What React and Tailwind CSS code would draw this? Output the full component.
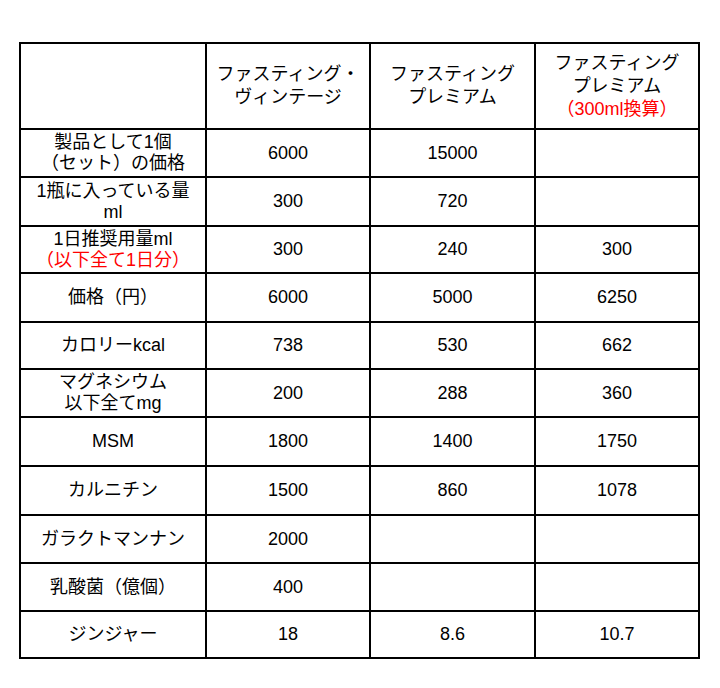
const rows = [
  { label: ["製品として1個", "（セット）の価格"], v: ["6000", "15000", ""] },
  { label: ["1瓶に入っている量", "ml"], v: ["300", "720", ""] },
  { label: ["1日推奨用量ml", <span className="text-[#ff0000]">（以下全て1日分）</span>], v: ["300", "240", "300"] },
  { label: ["価格（円）"], v: ["6000", "5000", "6250"] },
  { label: ["カロリーkcal"], v: ["738", "530", "662"] },
  { label: ["マグネシウム", "以下全てmg"], v: ["200", "288", "360"] },
  { label: ["MSM"], v: ["1800", "1400", "1750"] },
  { label: ["カルニチン"], v: ["1500", "860", "1078"] },
  { label: ["ガラクトマンナン"], v: ["2000", "", ""] },
  { label: ["乳酸菌（億個）"], v: ["400", "", ""] },
  { label: ["ジンジャー"], v: ["18", "8.6", "10.7"] },
];

const heights = ["h-[48px]", "h-[49px]", "h-[47px]", "h-[49px]", "h-[47px]", "h-[48px]", "h-[49px]", "h-[49px]", "h-[48px]", "h-[48px]", "h-[47px]"];

export default function App() {
  return (
    <div
      className="w-[720px] h-[688px] bg-white pt-[42px] pl-[19px]"
      style={{ fontFamily: '"Liberation Sans", "Noto Sans CJK JP", sans-serif' }}
    >
      <table className="table-fixed border-collapse w-[679px] text-[18px] leading-[21px] text-black">
        <colgroup>
          <col className="w-[186px]" />
          <col className="w-[164px]" />
          <col className="w-[165px]" />
          <col className="w-[164px]" />
        </colgroup>
        <thead>
          <tr className="h-[86px]">
            <th className="border-2 border-black font-normal"></th>
            <th className="border-2 border-black font-normal text-center align-middle leading-[23px]">
              ファスティング・<br />ヴィンテージ
            </th>
            <th className="border-2 border-black font-normal text-center align-middle leading-[23px]">
              ファスティング<br />プレミアム
            </th>
            <th className="border-2 border-black font-normal text-center align-middle leading-[23px]">
              ファスティング<br />プレミアム<br />
              <span className="text-[#ff0000]">（300ml換算）</span>
            </th>
          </tr>
        </thead>
        <tbody>
          {rows.map((r, i) => (
            <tr key={i} className={heights[i]}>
              <td className="border-2 border-black text-center align-middle px-0 whitespace-nowrap">
                {r.label.map((l, j) => (
                  <div key={j}>{l}</div>
                ))}
              </td>
              {r.v.map((v, j) => (
                <td key={j} className="border-2 border-black text-center align-middle">
                  {v}
                </td>
              ))}
            </tr>
          ))}
        </tbody>
      </table>
    </div>
  );
}
